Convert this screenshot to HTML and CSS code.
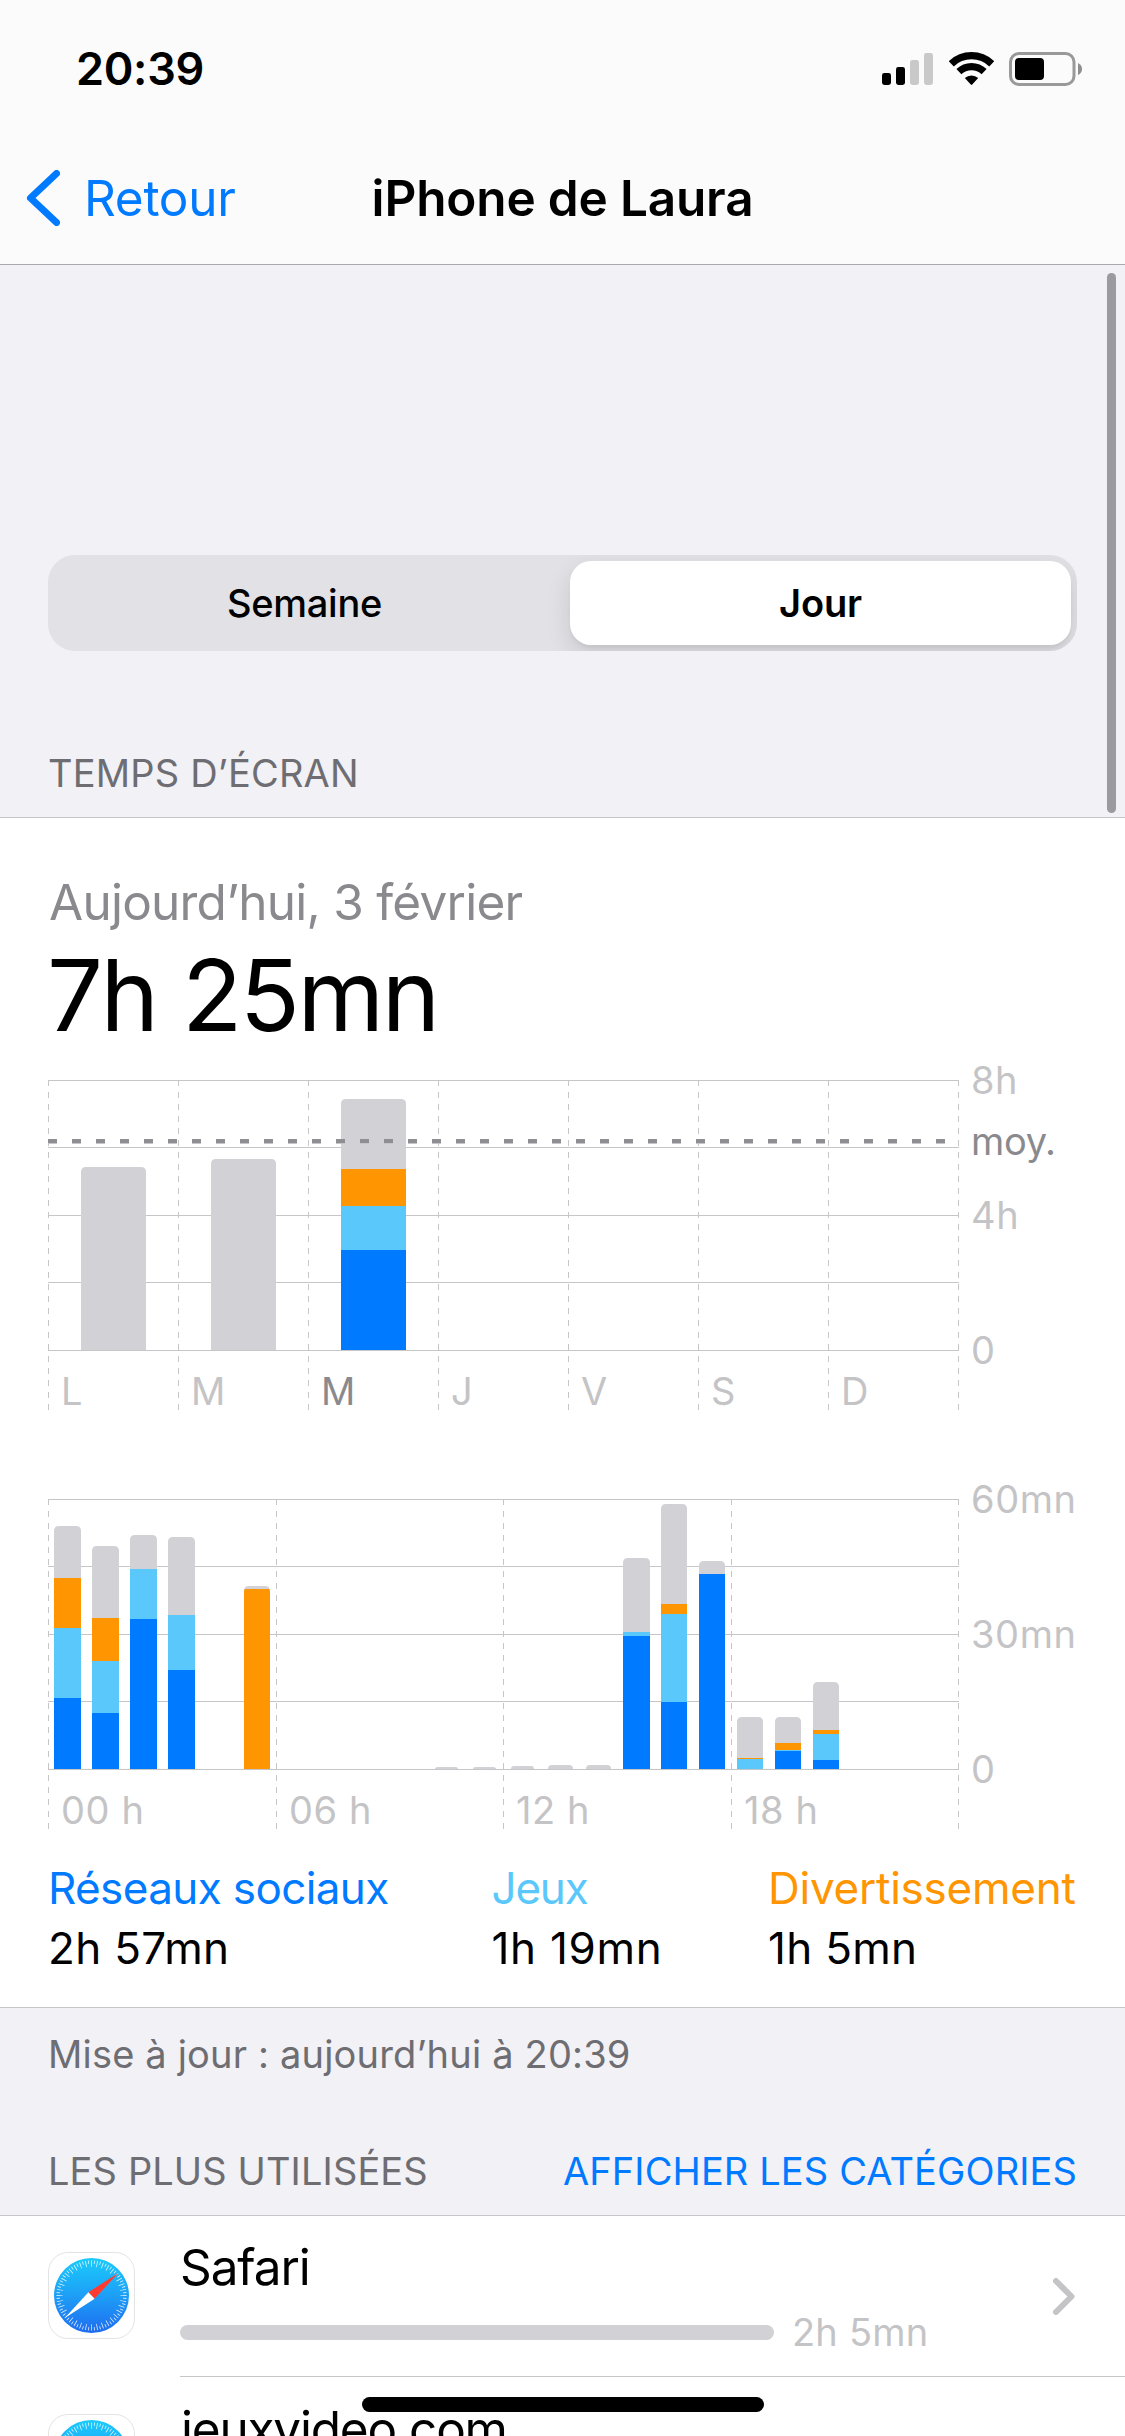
FILE: index.html
```html
<!DOCTYPE html>
<html lang="fr">
<head>
<meta charset="utf-8">
<title>iPhone de Laura – Temps d’écran</title>
<link rel="stylesheet" href="styles.css">
</head>
<body>
<svg class="defs" width="0" height="0" aria-hidden="true">
  <defs>
    <linearGradient id="dial" x1="0" y1="0" x2="0" y2="1">
      <stop offset="0" stop-color="#1bcbfb"/>
      <stop offset=".5" stop-color="#1d9ff6"/>
      <stop offset="1" stop-color="#1e6cf0"/>
    </linearGradient>
    <symbol id="safari" viewBox="0 0 87 87">
      <rect x=".5" y=".5" width="86" height="86" rx="19.5" fill="#fff" stroke="#e3e3e5"/>
      <circle cx="43.5" cy="43.5" r="37.5" fill="url(#dial)"/>
      <circle cx="43.5" cy="43.5" r="31.9" fill="none" stroke="#fff" stroke-opacity=".85" stroke-width="6.2" pathLength="72" stroke-dasharray=".28 1.72" stroke-dashoffset=".14"/>
      <circle cx="43.5" cy="43.5" r="33.3" fill="none" stroke="#fff" stroke-opacity=".85" stroke-width="3.4" pathLength="72" stroke-dasharray=".28 1.72" stroke-dashoffset="-.86"/>
      <path d="M70.3 21 40.4 40.2 46.6 46.8z" fill="#ff3b30"/>
      <path d="M16.8 66 40.4 40.2 46.6 46.8z" fill="#fff"/>
    </symbol>
  </defs>
</svg>

<div class="screen">
  <header class="header">
    <div class="status">
      <span class="clock">20:39</span>
      <div class="indicators">
        <svg width="51" height="34" viewBox="0 0 51 34">
          <rect x="0" y="21" width="9" height="12" rx="2.4"/>
          <rect x="14" y="15" width="9" height="18" rx="2.4"/>
          <rect x="28" y="8" width="9" height="25" rx="2.4" fill="#c9c9ca"/>
          <rect x="42" y="1" width="9" height="32" rx="2.4" fill="#c9c9ca"/>
        </svg>
        <svg width="45" height="34" viewBox="0 0 45 34">
          <g fill="none" stroke="#000" stroke-width="7.2">
            <path d="M2.3 11.8a29.3 29.3 0 0 1 40.4 0"/>
            <path d="M9.9 19.7a18.3 18.3 0 0 1 25.2 0"/>
          </g>
          <path d="M15.8 26a10 10 0 0 1 13.4 0l-6 6.6q-.7.8-1.4 0z"/>
        </svg>
        <svg width="74" height="34" viewBox="0 0 74 34">
          <rect x="1.5" y="1.5" width="63.5" height="31" rx="8.5" fill="none" stroke="#999" stroke-width="3"/>
          <rect x="6" y="6" width="29" height="22" rx="4"/>
          <path d="M69 11q4 2 4 6t-4 6z" fill="#8e8e8e"/>
        </svg>
      </div>
    </div>
    <nav class="nav">
      <a class="back">
        <svg width="34" height="56" viewBox="0 0 34 56"><path d="M30.500 3.5 4.500 28l26 24.500" /></svg>
        <span>Retour</span>
      </a>
      <h1 class="title">iPhone de Laura</h1>
    </nav>
  </header>

  <main>
    <div class="segments">
      <div class="segment">Semaine</div>
      <div class="segment selected">Jour</div>
    </div>
    <h2 class="section-title first">TEMPS D’ÉCRAN</h2>

    <section class="card">
      <div class="date">Aujourd’hui, 3 février</div>
      <div class="total">7h 25mn</div>

      <svg class="chart" width="1028" height="331" viewBox="0 0 1028 331">
        <path class="grid" d="M0 .5H911M0 67.500H911M0 135.500H911M0 202.500H911M0 270.500H911"/>
        <path class="ticks" d="M.5 0V331M130.500 0V331M260.500 0V331M390.500 0V331M520.500 0V331M650.500 0V331M780.500 0V331M910.500 0V331"/>
        <g class="other">
          <path d="M33 270V92q0-5 5-5h55q5 0 5 5V270z"/>
          <path d="M163 270V84q0-5 5-5h55q5 0 5 5V270z"/>
          <path d="M293 270V24q0-5 5-5h55q5 0 5 5V270z"/>
        </g>
        <rect class="fun" x="293" y="89" width="65" height="37"/>
        <rect class="games" x="293" y="126" width="65" height="44"/>
        <rect class="social" x="293" y="170" width="65" height="100"/>
        <path class="average" d="M0 61H904"/>
        <path class="average-shade" d="M0 63.500H904"/>
        <g class="days">
          <text x="13" y="325">L</text><text x="143" y="325">M</text><text class="today" x="273" y="325">M</text><text x="403" y="325">J</text><text x="533" y="325">V</text><text x="663" y="325">S</text><text x="793" y="325">D</text>
        </g>
        <g class="axis">
          <text x="923" y="14">8h</text><text class="strong" x="923" y="75">moy.</text><text x="923" y="149">4h</text><text x="923" y="284">0</text>
        </g>
      </svg>

      <svg class="chart hourly" width="1028" height="331" viewBox="0 0 1028 331">
        <path class="grid" d="M0 .5H911M0 67.500H911M0 135.500H911M0 202.500H911M0 270.500H911"/>
        <path class="ticks" d="M.5 0V331M228.500 0V331M455.500 0V331M683.500 0V331M910.500 0V331"/>
        <g class="other">
          <path d="M6 270V32q0-5 5-5h17q5 0 5 5V270z"/>
          <path d="M44 270V52q0-5 5-5h17q5 0 5 5V270z"/>
          <path d="M82 270V41q0-5 5-5h17q5 0 5 5V270z"/>
          <path d="M120 270V43q0-5 5-5h17q5 0 5 5V270z"/>
          <path d="M196 270V92q0-5 5-5h16q5 0 5 5V270z"/>
          <path d="M387 270q0-2 3-2h17q3 0 3 2z"/>
          <path d="M425 270q0-2 3-2h17q3 0 3 2z"/>
          <path d="M463 270q0-3 3-3h17q3 0 3 3z"/>
          <path d="M500 270q0-4 4-4h17q4 0 4 4z"/>
          <path d="M538 270q0-4 4-4h17q4 0 4 4z"/>
          <path d="M575 270V64q0-5 5-5h17q5 0 5 5V270z"/>
          <path d="M613 270V10q0-5 5-5h16q5 0 5 5V270z"/>
          <path d="M651 270V67q0-5 5-5h16q5 0 5 5V270z"/>
          <path d="M689 270V223q0-5 5-5h16q5 0 5 5V270z"/>
          <path d="M727 270V223q0-5 5-5h16q5 0 5 5V270z"/>
          <path d="M765 270V188q0-5 5-5h16q5 0 5 5V270z"/>
        </g>
        <g class="fun">
          <rect x="6" y="79" width="27" height="50"/>
          <rect x="44" y="119" width="27" height="43"/>
          <path d="M196 270V92l1-2h24l1 2V270z"/>
          <rect x="613" y="105" width="26" height="10"/>
          <rect x="689" y="259" width="26" height="1"/>
          <rect x="727" y="244" width="26" height="7"/>
          <rect x="765" y="231" width="26" height="4"/>
        </g>
        <g class="games">
          <rect x="6" y="129" width="27" height="70"/>
          <rect x="44" y="162" width="27" height="52"/>
          <rect x="82" y="70" width="27" height="50"/>
          <rect x="120" y="116" width="27" height="55"/>
          <rect x="575" y="133" width="27" height="4"/>
          <rect x="613" y="115" width="26" height="88"/>
          <rect x="689" y="260" width="26" height="10"/>
          <rect x="727" y="251" width="26" height="1"/>
          <rect x="765" y="235" width="26" height="26"/>
        </g>
        <g class="social">
          <rect x="6" y="199" width="27" height="71"/>
          <rect x="44" y="214" width="27" height="56"/>
          <rect x="82" y="120" width="27" height="150"/>
          <rect x="120" y="171" width="27" height="99"/>
          <rect x="575" y="137" width="27" height="133"/>
          <rect x="613" y="203" width="26" height="67"/>
          <rect x="651" y="75" width="26" height="195"/>
          <rect x="727" y="252" width="26" height="18"/>
          <rect x="765" y="261" width="26" height="9"/>
        </g>
        <g class="axis">
          <text x="13" y="325">00 h</text><text x="241" y="325">06 h</text><text x="468" y="325">12 h</text><text x="696" y="325">18 h</text>
          <text x="923" y="14">60mn</text><text x="923" y="149">30mn</text><text x="923" y="284">0</text>
        </g>
      </svg>

      <div class="legend">
        <div><div class="name name-social">Réseaux sociaux</div><div class="time">2h 57mn</div></div>
        <div><div class="name name-games">Jeux</div><div class="time time-games">1h 19mn</div></div>
        <div><div class="name name-fun">Divertissement</div><div class="time">1h 5mn</div></div>
      </div>
    </section>

    <p class="updated">Mise à jour : aujourd’hui à 20:39</p>
    <div class="list-head">
      <h2 class="section-title">LES PLUS UTILISÉES</h2>
      <a class="show">AFFICHER LES CATÉGORIES</a>
    </div>

    <div class="list">
      <div class="row">
        <svg class="app" width="87" height="87"><use href="#safari"/></svg>
        <div class="row-main">
          <div>
            <div class="app-name">Safari</div>
            <div class="usage"><span class="meter"></span><span>2h 5mn</span></div>
          </div>
          <svg class="chevron" width="22" height="37" viewBox="0 0 22 37"><path d="M3 3 18.500 18.500 3 34"/></svg>
        </div>
      </div>
      <div class="row">
        <svg class="app" width="87" height="87"><use href="#safari"/></svg>
        <div class="row-main">
          <div class="app-name site">jeuxvideo.com</div>
        </div>
      </div>
    </div>
  </main>
  <div class="scrollbar"></div>
  <div class="home"></div>
</div>
</body>
</html>
```
FILE: styles.css
```css
* { box-sizing: border-box; margin: 0; padding: 0; }
html, body { height: 2436px; overflow: hidden; }
body { font-family: Inter, "Liberation Sans", sans-serif; color: #000; }
h1, h2 { font-size: inherit; font-weight: inherit; }
svg { display: block; flex: none; }
.defs { position: absolute; }

.screen {
  position: relative;
  width: 1125px;
  height: 2436px;
  overflow: hidden;
  background: #f2f1f6;
  line-height: 60px;
  white-space: nowrap;
}

.header { height: 265px; background: #fbfbfc; border-bottom: 1px solid #a9a9ac; }
.status { height: 132px; display: flex; justify-content: space-between; padding: 38px 42px 0 76px; }
.clock { padding-top: 1px; font-size: 45px; font-weight: 600; letter-spacing: -.3px; }
.indicators { display: flex; gap: 15.500px; padding-top: 14px; }
.nav { height: 132px; display: grid; grid-template-columns: 1fr auto 1fr; align-items: center; font-size: 49.5px; }
.back { display: flex; align-items: center; gap: 24px; padding-left: 26px; color: #007aff; letter-spacing: -.3px; }
.back svg { fill: none; stroke: #007aff; stroke-width: 7; stroke-linecap: round; stroke-linejoin: round; }
.title { font-weight: 600; letter-spacing: -.17px; }

.segments {
  display: grid;
  grid-template-columns: 522px 501px;
  height: 96px;
  margin: 290px 48px 0;
  padding: 6px 0;
  border-radius: 27px;
  background: #e2e1e6;
  overflow: hidden;
  font-size: 38px;
  line-height: 84px;
  text-align: center;
}
.segment { font-weight: 500; letter-spacing: -.27px; padding-right: 9px; }
.segment.selected {
  padding: 0;
  font-weight: 600;
  letter-spacing: -.14px;
  border-radius: 21px;
  background: #fff;
  box-shadow: 0 9px 24px rgba(0,0,0,.12), 0 3px 3px rgba(0,0,0,.04);
}

.section-title { font-size: 38px; letter-spacing: .12px; color: #6d6d72; }
.section-title.first { padding: 92px 48px 14px; letter-spacing: .2px; }

.card { height: 1191px; padding: 54px 48px 0; background: #fff; border: solid #c6c6c8; border-width: 1px 0; }
.date { font-size: 49.5px; letter-spacing: -.76px; color: #8a8a8e; padding-left: 1px; }
.total { font-size: 99px; line-height: 110px; letter-spacing: -2.5px; margin-top: 8px; margin-left: -1px; }

.chart { margin-top: 30px; overflow: visible; }
.chart.hourly { margin-top: 88px; }
.grid, .ticks { fill: none; stroke: #c6c6c8; stroke-width: 1; }
.ticks { stroke-dasharray: 6 6; }
.other { fill: #d1d1d6; }
.fun { fill: #ff9500; }
.games { fill: #5ac8fa; }
.social { fill: #007aff; }
.average, .average-shade { fill: none; stroke: #8e8e93; stroke-width: 4; stroke-dasharray: 9 15; }
.average-shade { stroke: #c6c6c9; stroke-width: 1; }
.chart text { font-size: 38px; fill: #c4c4c6; }
.axis text { letter-spacing: .6px; }
.chart .today { fill: #8a8a8e; }
.chart .strong { fill: #8a8a8e; letter-spacing: -.3px; }

.legend { display: grid; grid-template-columns: 443.5px 276.5px auto; margin-top: 28px; font-size: 44px; }
.name-social { color: #007aff; letter-spacing: -.62px; }
.name-games { color: #5ac8fa; letter-spacing: -1.2px; }
.name-fun { color: #ff9500; letter-spacing: -.23px; }
.time { letter-spacing: .3px; }
.time-games { letter-spacing: .7px; }

.updated { padding: 16px 48px 0; font-size: 38px; letter-spacing: .18px; color: #6d6d72; }
.list-head { display: flex; justify-content: space-between; padding: 57px 48px 14px 48px; }
.show { font-size: 38px; letter-spacing: .12px; color: #007aff; }

.list { background: #fff; border-top: 1px solid #c6c6c8; }
.row { display: flex; gap: 45px; height: 162px; padding-left: 48px; }
.app { margin-top: 36px; }
.row-main { flex: 1; display: flex; justify-content: space-between; height: 161px; padding: 21px 50px 0 0; border-bottom: 1px solid #c6c6c8; }
.app-name { font-size: 49.5px; letter-spacing: -1.1px; }
.site { letter-spacing: -1.2px; padding-left: 1px; }
.usage { display: flex; align-items: center; gap: 18px; margin-top: 5px; font-size: 38px; letter-spacing: .2px; color: #c4c4c6; }
.meter { width: 594px; height: 15px; border-radius: 7.500px; background: #d1d1d6; }
.chevron { margin-top: 41px; fill: none; stroke: #c4c4c6; stroke-width: 6; stroke-linecap: round; stroke-linejoin: round; }

.scrollbar { position: absolute; left: 1107px; top: 273px; width: 9px; height: 540px; border-radius: 5px; background: #9b9b9f; }
.home { position: absolute; left: 362px; top: 2397px; width: 402px; height: 15px; border-radius: 8px; background: #000; }
```
